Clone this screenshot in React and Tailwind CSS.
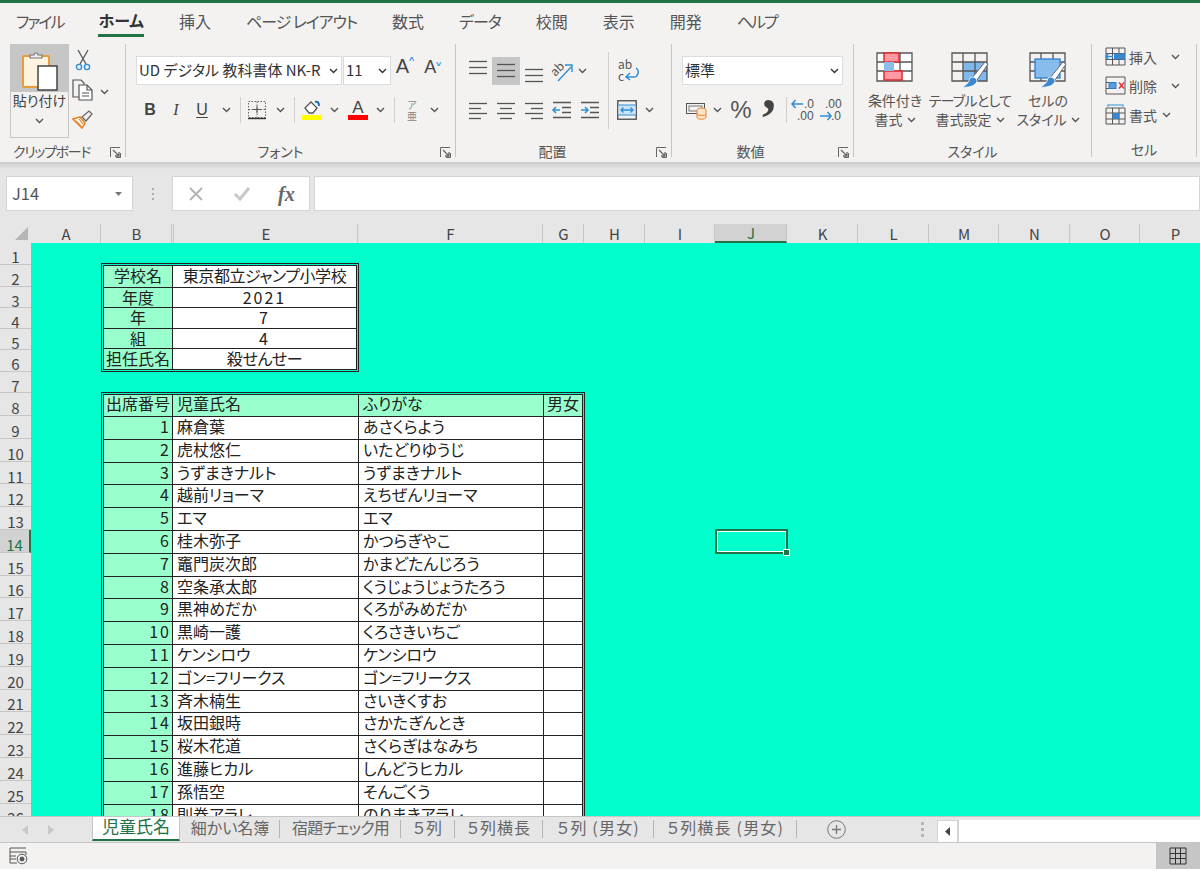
// Excel home ribbon with a class list sheet

const Chev = ({ dark }) => (
  <svg width="9" height="6" viewBox="0 0 9 6" fill="none" stroke={dark ? '#333' : '#555'} strokeWidth="1.4">
    <path d="M1 1l3.5 3.5L8 1" />
  </svg>
);

const Launcher = () => (
  <svg width="11" height="11" viewBox="0 0 11 11" fill="none" stroke="#666" strokeWidth="1">
    <path d="M.5 10V.5H10" />
    <path d="M3 3l6 6M9 5v4H5" strokeWidth="1.3" />
    <path d="M6 10.5h4.500V6" />
  </svg>
);

const Lines = ({ rows, y = 0, gap = 6 }) => (
  <svg width="22" height="24" viewBox="0 0 22 24" stroke="#555" strokeWidth="1.3">
    {rows.map(([x1, x2], i) => (
      <path key={i} d={`M${x1} ${4.5 + y + i * gap}H${x2}`} />
    ))}
  </svg>
);

const PasteIcon = () => (
  <svg width="38" height="40" viewBox="0 0 38 40">
    <rect x="2" y="5" width="26" height="31" rx="1" fill="#fdf3df" stroke="#ed9a3c" strokeWidth="2" />
    <path d="M9 7V4h4a2 2 0 0 1 4 0h4v3z" fill="#eee" stroke="#777" strokeWidth="1.2" />
    <rect x="17" y="15" width="19" height="24" fill="#fff" stroke="#444" strokeWidth="1.5" />
  </svg>
);

const Scissors = () => (
  <svg width="16" height="22" viewBox="0 0 16 22" fill="none">
    <path d="M3 1l8 14M13 1L5 15" stroke="#555" strokeWidth="1.3" />
    <circle cx="4" cy="18" r="2.6" stroke="#2f8fd6" strokeWidth="1.4" />
    <circle cx="12" cy="18" r="2.6" stroke="#2f8fd6" strokeWidth="1.4" />
  </svg>
);

const CopyIcon = () => (
  <svg width="22" height="22" viewBox="0 0 22 22" fill="#f3f2f1" stroke="#555" strokeWidth="1.2">
    <path d="M1 1h8l3 3v14H1z" />
    <path d="M7 6h8l5 5v10H7z" fill="#fff" />
    <path d="M15 6v5h5M10 14h7M10 17h7" fill="none" />
  </svg>
);

const BrushIcon = () => (
  <svg width="22" height="20" viewBox="0 0 22 20">
    <path d="M1 10l7-2 5 6-3 5z" fill="#fff" stroke="#e6862a" strokeWidth="1.6" />
    <path d="M4 12l5 5M7 10l4 5" stroke="#e6862a" strokeWidth="1.2" />
    <path d="M10 8l7-6 3 3-6 7z" fill="#eee" stroke="#666" strokeWidth="1.2" />
  </svg>
);

const BorderIcon = () => (
  <svg width="20" height="20" viewBox="0 0 20 20" stroke="#666" fill="none">
    <path d="M1.5 1.5h17v16h-17zM10 1.5v16M1.5 9.5h17" strokeDasharray="1.5 1.5" />
    <path d="M1 18.5h18" stroke="#333" strokeWidth="1.4" />
    <path d="M6 9.5h8M10 6v7" stroke="#555" />
  </svg>
);

const FillIcon = () => (
  <div className="flex flex-col items-center">
    <svg width="20" height="15" viewBox="0 0 20 15" fill="none">
      <path d="M3 8l6-6 6 6-4 5H7z" stroke="#555" strokeWidth="1.3" fill="#fff" />
      <path d="M13 2c3-1 4 1 4 4" stroke="#1b6ec2" strokeWidth="2" />
    </svg>
    <div className="w-[20px] h-[5px] bg-[#ffff00]" />
  </div>
);

const OrientIcon = () => (
  <svg width="22" height="24" viewBox="0 0 22 24" fill="none">
    <text x="0" y="14" fontSize="12" fill="#555" transform="rotate(-45 7 11)">ab</text>
    <path d="M7 22L20 8M14 6h7v7" stroke="#2f8fd6" strokeWidth="1.4" />
  </svg>
);

const WrapIcon = () => (
  <svg width="24" height="24" viewBox="0 0 24 24" fill="none">
    <text x="2" y="10" fontSize="12" fill="#555">ab</text>
    <text x="2" y="22" fontSize="12" fill="#555">c</text>
    <path d="M20 9c4 3 2 9-2 9h-7M14 14l-4 4 4 3" stroke="#2f8fd6" strokeWidth="1.5" />
  </svg>
);

const IndentIcon = ({ right }) => (
  <svg width="20" height="20" viewBox="0 0 20 20" fill="none">
    <path d="M1 2.500h18M10 7.500h9M10 12.500h9M1 17.500h18" stroke="#555" strokeWidth="1.3" />
    {right ? (
      <path d="M1 10h7M5 7l3 3-3 3" stroke="#2f8fd6" strokeWidth="1.5" />
    ) : (
      <path d="M1 10h7M4 7l-3 3 3 3" stroke="#2f8fd6" strokeWidth="1.5" />
    )}
  </svg>
);

const MergeIcon = () => (
  <svg width="20" height="20" viewBox="0 0 20 20" fill="none">
    <rect x=".75" y=".75" width="18.500" height="18.500" stroke="#555" strokeWidth="1.4" />
    <rect x="1.500" y="5" width="17" height="10" fill="#cbe3f5" />
    <path d="M1 5h18M1 15h18" stroke="#2f8fd6" />
    <path d="M4 10h12M6.500 7.500L4 10l2.500 2.500M13.500 7.500L16 10l-2.500 2.500" stroke="#2f8fd6" strokeWidth="1.3" />
  </svg>
);

const AccountIcon = () => (
  <svg width="21" height="20" viewBox="0 0 21 20" fill="none">
    <rect x=".5" y="3.500" width="18" height="10" stroke="#555" />
    <rect x="3" y="6" width="13" height="5" stroke="#777" />
    <ellipse cx="15.500" cy="10" rx="4.500" ry="2" fill="#fbe3c8" stroke="#e8862a" />
    <path d="M11 10v7c0 3 9 3 9 0v-7M11 14c0 2 9 2 9 0" fill="#fbe3c8" stroke="#e8862a" />
  </svg>
);

const DecimalIcon = ({ up }) => (
  <svg width="24" height="26" viewBox="0 0 24 26" fill="none">
    <text x={up ? 13 : 7} y="11" fontSize="12" fill="#555" fontFamily="Liberation Sans">{up ? '.0' : '.00'}</text>
    <text x={up ? 6 : 13} y="23" fontSize="12" fill="#555" fontFamily="Liberation Sans">{up ? '.00' : '.0'}</text>
    {up ? (
      <path d="M12 7H1M4.500 3L1 7l3.500 4" stroke="#2f8fd6" strokeWidth="1.6" />
    ) : (
      <path d="M2 19h11M9.500 15l3.500 4-3.500 4" stroke="#2f8fd6" strokeWidth="1.6" />
    )}
  </svg>
);

const TableGrid = ({ children }) => (
  <svg width="38" height="36" viewBox="0 0 38 36" fill="none">
    {children}
  </svg>
);

const GridLines = () => (
  <path d="M1 1h35v28H1zM1 10h35M1 19h35M12 1v28M24 1v28" stroke="#555" strokeWidth="1.300" />
);

const BrushTip = () => (
  <>
    <path d="M21 26L34 10l3 2-11 16z" fill="#fff" stroke="#666" />
    <path d="M11 35c6 1 14-1 15-6 0-3-4-5-7-3-1 4-3 7-8 9z" fill="#3a87cf" stroke="#fff" strokeWidth=".8" />
  </>
);

const CondIcon = () => (
  <TableGrid>
    <rect x="1" y="1" width="35" height="28" fill="#fff" />
    <GridLines />
    <rect x="8" y="1" width="15" height="9" fill="#ff9aa5" stroke="#e02b2b" strokeWidth="1.500" />
    <rect x="8" y="19" width="18" height="9" fill="#ff9aa5" stroke="#e02b2b" strokeWidth="1.500" />
    <rect x="8" y="10" width="10" height="9" fill="#8bbde8" />
  </TableGrid>
);

const TableIcon = () => (
  <TableGrid>
    <rect x="12" y="10" width="24" height="19" fill="#7fb8ec" />
    <GridLines />
    <BrushTip />
  </TableGrid>
);

const CellStyleIcon = () => (
  <TableGrid>
    <GridLines />
    <rect x="6" y="7" width="25" height="19" fill="#87bcec" stroke="#2d7fd0" strokeWidth="1.300" />
    <BrushTip />
  </TableGrid>
);

const InsertIcon = () => (
  <svg width="21" height="19" viewBox="0 0 21 19" fill="none">
    <path d="M1 1h19v17H1zM1 6.500h19M1 12.500h19M7.500 1v17M14 1v17" stroke="#555" />
    <rect x="9" y="6.500" width="11" height="6" fill="#3a87cf" />
    <path d="M8 9.500H1M3.500 6.500L.75 9.500l2.750 3" stroke="#2f8fd6" strokeWidth="1.400" />
  </svg>
);

const DeleteIcon = () => (
  <svg width="21" height="19" viewBox="0 0 21 19" fill="none">
    <path d="M1 1h19v17H1zM1 6.500h7M1 12.500h7" stroke="#555" />
    <rect x="4" y="6.500" width="7" height="6" fill="#5b9ddc" stroke="#2f7cc4" />
    <path d="M14 6.500l5 6M19 6.500l-5 6" stroke="#e8333a" strokeWidth="1.500" />
  </svg>
);

const FormatIcon = () => (
  <svg width="21" height="21" viewBox="0 0 21 21" fill="none">
    <path d="M1 4h19v16H1zM1 9h19M1 15h19M7.500 4v16M14 4v16" stroke="#555" />
    <rect x="7.500" y="9" width="7" height="6" fill="#3a87cf" />
    <path d="M3 1h15M3 .5v2M18 .5v2" stroke="#2f8fd6" strokeWidth="1.200" />
  </svg>
);

const Divider = () => <div className="w-px h-[113px] bg-[#c8c6c4] shrink-0" />;
const Sep = () => <div className="w-px h-[26px] bg-[#d2d0ce] shrink-0" />;

const Group = ({ w, label, labelClass = '', launcher, children }) => (
  <div className={`${w} shrink-0 relative`}>
    <div className="h-[98px]">{children}</div>
    <div className={`h-[17px] flex items-center justify-center text-[14px] leading-none text-[#555] whitespace-nowrap ${labelClass}`}>{label}</div>
    {launcher && (
      <div className="absolute right-[4px] bottom-[4px] flex">
        <Launcher />
      </div>
    )}
  </div>
);

const Slot = ({ w, active, children }) => (
  <div className={`${w} h-[28px] shrink-0 flex items-center justify-center ${active ? 'bg-[#c6c6c6]' : ''}`}>{children}</div>
);

const StyleButton = ({ w, icon, top, topClass = '', bottom }) => (
  <div className={`${w} flex flex-col items-center shrink-0 whitespace-nowrap`}>
    <div className="h-[38px] flex items-start">{icon}</div>
    <div className={`text-[14px] leading-[19px] mt-[1px] text-[#555] ${topClass}`}>{top}</div>
    <div className="text-[14px] leading-[19px] text-[#555] flex items-center gap-[4px]">
      {bottom}
      <Chev />
    </div>
  </div>
);

const CellRow = ({ icon, label, chevW }) => (
  <div className="h-[29px] flex items-center pl-[12px]">
    <div className="w-[22px] flex justify-center">{icon}</div>
    <div className="ml-[3px] w-[32px] text-[14px] text-[#555] leading-none">{label}</div>
    <div className={`${chevW} flex justify-end`}>
      <Chev />
    </div>
  </div>
);

const Ribbon = () => (
  <div className="flex h-[122px] bg-[#f3f2f1] pt-[4px] overflow-hidden">
    <Group w="w-[125px]" label="クリップボード" labelClass="pr-[22px] tracking-[-1.3px]" launcher>
      <div className="flex pl-[10px]">
        <div className="w-[59px] h-[94px] border border-[#c6c6c6] flex flex-col items-center">
          <div className="w-full h-[47px] bg-[#c6c6c6] flex items-center justify-center pt-[4px]">
            <PasteIcon />
          </div>
          <div className="text-[14px] leading-none mt-[1px] text-[#444] whitespace-nowrap">貼り付け</div>
          <div className="mt-[11px] flex">
            <Chev />
          </div>
        </div>
        <div className="ml-[3px] w-[22px] flex flex-col items-center pt-[5px] gap-[8px]">
          <Scissors />
          <CopyIcon />
          <BrushIcon />
        </div>
        <div className="pt-[45px] ml-[6px]">
          <Chev />
        </div>
      </div>
    </Group>
    <Divider />

    <Group w="w-[329px]" label="フォント" labelClass="pr-[20px]" launcher>
      <div className="pl-[10px] pt-[12px]">
        <div className="flex items-center h-[29px]">
          <div className="w-[206px] h-[29px] bg-white border border-[#dcdcdc] flex items-center pl-[2px] text-[15px] text-[#333] whitespace-nowrap">
            <span className="w-[190px]">UD デジタル 教科書体 NK-R</span>
            <Chev dark />
          </div>
          <div className="ml-px w-[48px] h-[29px] bg-white border border-[#dcdcdc] flex items-center justify-between pl-[2px] pr-[3px] text-[15px] text-[#333]">
            11
            <Chev dark />
          </div>
          <div className="w-[28px] h-[29px] flex justify-center items-start text-[20px] text-[#444] leading-none font-['Liberation_Sans',sans-serif]">
            A<span className="text-[9px] text-[#2f8fd6] font-bold">^</span>
          </div>
          <div className="w-[28px] h-[29px] pt-[2px] flex justify-center items-start text-[18px] text-[#444] leading-none font-['Liberation_Sans',sans-serif]">
            A<span className="text-[9px] text-[#2f8fd6] font-bold rotate-180">^</span>
          </div>
        </div>
        <div className="flex items-center mt-[11px]">
          <div className="w-[1px]" />
          <Slot w="w-[26px]"><span className="text-[16px] font-bold text-[#444] font-['Liberation_Sans',sans-serif]">B</span></Slot>
          <Slot w="w-[26px]"><span className="text-[16px] italic text-[#444] font-['Liberation_Serif',serif]">I</span></Slot>
          <Slot w="w-[26px]"><span className="text-[16px] underline underline-offset-2 text-[#444] font-['Liberation_Sans',sans-serif]">U</span></Slot>
          <Slot w="w-[22px]"><Chev /></Slot>
          <div className="ml-[3px]"><Sep /></div>
          <div className="w-[2px]" />
          <Slot w="w-[28px]"><BorderIcon /></Slot>
          <Slot w="w-[18px]"><Chev /></Slot>
          <div className="ml-[5px]"><Sep /></div>
          <div className="w-[2px]" />
          <Slot w="w-[30px]"><FillIcon /></Slot>
          <Slot w="w-[14px]"><Chev /></Slot>
          <div className="w-[2px]" />
          <Slot w="w-[30px]">
            <div className="flex flex-col items-center">
              <span className="text-[17px] leading-[15px] h-[15px] text-[#444] font-['Liberation_Sans',sans-serif]">A</span>
              <div className="w-[20px] h-[5px] bg-[#ff0000]" />
            </div>
          </Slot>
          <Slot w="w-[14px]"><Chev /></Slot>
          <div className="ml-[7px]"><Sep /></div>
          <div className="w-[2px]" />
          <Slot w="w-[30px]">
            <div className="flex flex-col items-center text-[10px] leading-[11px] text-[#888]">
              <span>ア</span>
              <span>亜</span>
            </div>
          </Slot>
          <Slot w="w-[14px]"><Chev /></Slot>
        </div>
      </div>
    </Group>
    <Divider />

    <Group w="w-[215px]" label="配置" labelClass="pr-[22px]" launcher>
      <div className="flex pl-[8px] pt-[12px]">
        <div className="w-[144px] shrink-0">
          <div className="flex items-center h-[29px]">
            <Slot w="w-[28px]"><Lines rows={[[2, 20], [2, 20], [2, 20]]} y={-2} /></Slot>
            <Slot w="w-[28px]" active><Lines rows={[[2, 20], [2, 20], [2, 20]]} y={1} /></Slot>
            <Slot w="w-[28px]"><Lines rows={[[2, 20], [2, 20], [2, 20]]} y={6} /></Slot>
            <Slot w="w-[28px]"><OrientIcon /></Slot>
            <Slot w="w-[12px]"><Chev /></Slot>
          </div>
          <div className="flex items-center mt-[11px]">
            <Slot w="w-[28px]"><Lines rows={[[2, 20], [2, 14], [2, 20], [2, 14]]} y={1} gap={5} /></Slot>
            <Slot w="w-[28px]"><Lines rows={[[2, 20], [5, 17], [2, 20], [5, 17]]} y={1} gap={5} /></Slot>
            <Slot w="w-[28px]"><Lines rows={[[2, 20], [8, 20], [2, 20], [8, 20]]} y={1} gap={5} /></Slot>
            <Slot w="w-[28px]"><IndentIcon /></Slot>
            <Slot w="w-[28px]"><IndentIcon right /></Slot>
          </div>
        </div>
        <div className="w-px h-[77px] -mt-[4px] bg-[#d2d0ce] shrink-0" />
        <div className="ml-[3px] w-[46px]">
          <div className="h-[29px] w-[32px] flex items-center justify-center"><WrapIcon /></div>
          <div className="flex items-center mt-[11px]">
            <Slot w="w-[30px]"><MergeIcon /></Slot>
            <Slot w="w-[14px]"><Chev /></Slot>
          </div>
        </div>
      </div>
    </Group>
    <Divider />

    <Group w="w-[181px]" label="数値" labelClass="pr-[24px]" launcher>
      <div className="pl-[10px] pt-[12px]">
        <div className="w-[161px] h-[29px] bg-white border border-[#dcdcdc] flex items-center justify-between pl-[2px] pr-[3px] text-[15px] text-[#333]">
          標準
          <Chev dark />
        </div>
        <div className="flex items-center mt-[11px] ml-[2px]">
          <Slot w="w-[24px]"><AccountIcon /></Slot>
          <Slot w="w-[18px]"><Chev /></Slot>
          <Slot w="w-[30px]"><span className="text-[24px] leading-none text-[#555] font-['Liberation_Sans',sans-serif]">%</span></Slot>
          <Slot w="w-[26px]"><span className="text-[56px] leading-none -mt-[42px] font-bold text-[#444] font-['Liberation_Serif',serif]">,</span></Slot>
          <div className="ml-[4px]"><Sep /></div>
          <div className="w-[3px]" />
          <Slot w="w-[26px]"><DecimalIcon up /></Slot>
          <Slot w="w-[28px]"><DecimalIcon /></Slot>
        </div>
      </div>
    </Group>
    <Divider />

    <Group w="w-[237px]" label="スタイル">
      <div className="flex pl-[4px] pt-[8px]">
        <StyleButton w="w-[74px]" icon={<CondIcon />} top="条件付き" bottom="書式" />
        <StyleButton w="w-[76px]" icon={<TableIcon />} top="テーブルとして" topClass="tracking-[-0.7px]" bottom="書式設定" />
        <StyleButton w="w-[80px]" icon={<CellStyleIcon />} top="セルの" bottom="スタイル" />
      </div>
    </Group>
    <Divider />

    <Group w="w-[104px]" label="セル">
      <div className="-mt-[2px]">
        <CellRow icon={<InsertIcon />} label="挿入" chevW="w-[19px]" />
        <CellRow icon={<DeleteIcon />} label="削除" chevW="w-[19px]" />
        <CellRow icon={<FormatIcon />} label="書式" chevW="w-[10px]" />
      </div>
    </Group>
    <Divider />
  </div>
);

const MENU = [
  ['ファイル', 'tracking-[-2px]'],
  ['ホーム', ''],
  ['挿入', ''],
  ['ページ レイアウト', 'tracking-[-1.1px]'],
  ['数式', ''],
  ['データ', 'tracking-[-1px]'],
  ['校閲', ''],
  ['表示', ''],
  ['開発', ''],
  ['ヘルプ', 'tracking-[-2px]'],
];

const COLUMNS = [
  ['A', 'w-[70px]'],
  ['B', 'w-[71px]'],
  ['', 'w-[2px]'],
  ['E', 'w-[184px]'],
  ['F', 'w-[185px]'],
  ['G', 'w-[41px]'],
  ['H', 'w-[61px]'],
  ['I', 'w-[70px]'],
  ['J', 'w-[72px]'],
  ['K', 'w-[71px]'],
  ['L', 'w-[71px]'],
  ['M', 'w-[70px]'],
  ['N', 'w-[71px]'],
  ['O', 'w-[70px]'],
  ['P', 'w-[71px]'],
];

const ROW_HEADS = [
  [1, 'h-[21.500px]'],
  [2, 'h-[22px]'],
  [3, 'h-[21px]'],
  [4, 'h-[21px]'],
  [5, 'h-[21px]'],
  [6, 'h-[22px]'],
  [7, 'h-[21.500px]'],
  [8, 'h-[23px]'],
  ...Array.from({ length: 18 }, (_, i) => [i + 9, 'h-[22.800px]']),
];

const INFO = [
  ['学校名', '東京都立ジャンプ小学校'],
  ['年度', '2021'],
  ['年', '7'],
  ['組', '4'],
  ['担任氏名', '殺せんせー'],
];

const STUDENTS = [
  ['麻倉葉', 'あさくらよう'],
  ['虎杖悠仁', 'いたどりゆうじ'],
  ['うずまきナルト', 'うずまきナルト'],
  ['越前リョーマ', 'えちぜんリョーマ'],
  ['エマ', 'エマ'],
  ['桂木弥子', 'かつらぎやこ'],
  ['竈門炭次郎', 'かまどたんじろう'],
  ['空条承太郎', 'くうじょうじょうたろう'],
  ['黒神めだか', 'くろがみめだか'],
  ['黒崎一護', 'くろさきいちご'],
  ['ケンシロウ', 'ケンシロウ'],
  ['ゴン=フリークス', 'ゴン=フリークス'],
  ['斉木楠生', 'さいきくすお'],
  ['坂田銀時', 'さかたぎんとき'],
  ['桜木花道', 'さくらぎはなみち'],
  ['進藤ヒカル', 'しんどうヒカル'],
  ['孫悟空', 'そんごくう'],
  ['則巻アラレ', 'のりまきアラレ'],
];

const TABS = [
  ['細かい名簿', 'w-[100px]', ''],
  ['宿題チェック用', 'w-[121px]', 'tracking-[-0.8px]'],
  ['５列', 'w-[54px]', 'tracking-[1px]'],
  ['５列横長', 'w-[88px]', 'tracking-[1px]'],
  ['５列 (男女)', 'w-[111px]', 'tracking-[1.200px]'],
  ['５列横長 (男女)', 'w-[143px]', 'tracking-[1.200px]'],
];

const Sheet = () => (
  <div className="relative flex-1 bg-[#00ffcc] overflow-hidden pl-[70px] pt-[20px] text-[16px] text-[#222]">
    <div className="w-[258px] border-[3px] border-double border-[#222] bg-white bg-clip-padding">
      {INFO.map(([k, v], i) => (
        <div key={k} className={`flex h-[20.600px] leading-[18px] ${i > 0 ? 'border-t border-[#222]' : ''}`}>
          <div className="w-[69px] bg-[#99ffcc] border-r border-[#222] text-center whitespace-nowrap">{k}</div>
          <div className="flex-1 text-center whitespace-nowrap tracking-[-0.45px]">
            {/^\d+$/.test(v) ? <span className="tracking-[2px]">{v}</span> : v}
          </div>
        </div>
      ))}
    </div>
    <div className="w-[484px] mt-[20px] border-[3px] border-double border-[#222] bg-white bg-clip-padding">
      <div className="flex h-[21px] leading-[17px] bg-[#99ffcc]">
        <div className="w-[69px] border-r border-[#222] text-center whitespace-nowrap">出席番号</div>
        <div className="w-[186px] border-r border-[#222] pl-[4px]">児童氏名</div>
        <div className="w-[185px] border-r border-[#222] pl-[4px]">ふりがな</div>
        <div className="flex-1 text-center">男女</div>
      </div>
      {STUDENTS.map(([name, kana], i) => (
        <div key={name} className="flex h-[22.800px] leading-[19px] border-t border-[#222]">
          <div className="w-[69px] bg-[#99ffcc] border-r border-[#222] text-right pr-[1px] tracking-[2px]">{i + 1}</div>
          <div className="w-[186px] border-r border-[#222] pl-[4px] whitespace-nowrap">{name}</div>
          <div className="w-[185px] border-r border-[#222] pl-[4px] whitespace-nowrap">{kana}</div>
          <div className="flex-1" />
        </div>
      ))}
    </div>
    {/* selected cell J14 */}
    <div className="absolute left-[684px] top-[286px] w-[73px] h-[25px] border-2 border-[#217346] shadow-[inset_0_0_0_1px_#ffffff]">
      <div className="absolute -right-[4px] -bottom-[4px] w-[7px] h-[7px] bg-[#217346] border border-white" />
    </div>
  </div>
);

export default function App() {
  return (
    <div className="w-[1200px] h-[871px] overflow-hidden flex flex-col bg-white font-['Noto_Sans_CJK_JP',sans-serif] [font-feature-settings:'palt']">
      <div className="h-[3px] bg-[#217346] shrink-0" />

      {/* menu tabs */}
      <div className="h-[37px] shrink-0 bg-[#f3f2f1] flex gap-[35px] pl-[16px] text-[16px] text-[#555]">
        {MENU.map(([m, track]) => (
          <div key={m} className={`flex items-center whitespace-nowrap ${track} ${m === 'ホーム' ? 'font-bold text-[#333] border-b-[3px] border-[#217346] h-[34px] pt-[3px]' : 'h-[35px]'}`}>
            {m}
          </div>
        ))}
      </div>

      <Ribbon />

      {/* formula bar */}
      <div className="h-[62px] shrink-0 pt-[14px] bg-gradient-to-b from-[#c9c9c9] from-0% to-[#e6e6e6] to-[12%]">
        <div className="flex h-[35px]">
          <div className="ml-[6px] w-[127px] bg-white border border-[#d4d4d4] flex items-center justify-between pl-[5px] pr-[10px] text-[16.500px] text-[#555]">
            J14
            <svg width="7" height="4" viewBox="0 0 7 4"><path d="M0 0h7L3.500 4z" fill="#777" /></svg>
          </div>
          <div className="w-[39px] flex flex-col items-center justify-center gap-[3px]">
            <div className="w-[2px] h-[2px] bg-[#aaa]" />
            <div className="w-[2px] h-[2px] bg-[#aaa]" />
            <div className="w-[2px] h-[2px] bg-[#aaa]" />
          </div>
          <div className="w-[138px] bg-white border border-[#d4d4d4] flex items-center pl-[15px]">
            <svg width="16" height="16" viewBox="0 0 16 16" stroke="#b5b5b5" strokeWidth="2" fill="none">
              <path d="M2 2l12 12M14 2L2 14" />
            </svg>
            <svg className="ml-[29px]" width="18" height="16" viewBox="0 0 18 16" stroke="#c8c8c8" strokeWidth="3" fill="none">
              <path d="M2 8l5 5 9-11" />
            </svg>
            <span className="ml-[27px] text-[20px] leading-none font-bold italic text-[#666] font-['Liberation_Serif',serif]">fx</span>
          </div>
          <div className="ml-[4px] flex-1 bg-white border border-[#d4d4d4]" />
        </div>
      </div>

      {/* column headers */}
      <div className="h-[19px] shrink-0 bg-[#e6e6e6] flex overflow-hidden text-[15px] leading-none text-[#444]">
        <div className="w-[31px] shrink-0 flex items-end justify-end pr-[3px] pb-[3px]">
          <svg width="13" height="13" viewBox="0 0 13 13"><path d="M13 0v13H0z" fill="#b5b5b5" /></svg>
        </div>
        {COLUMNS.map(([c, w]) => (
          <div key={w + c} className={`${w} shrink-0 flex items-center justify-center pl-px border-r border-[#c6c6c6] ${c === 'J' ? 'bg-[#d2d2d2] text-[#217346] border-b-2 border-b-[#217346]' : ''}`}>
            {c}
          </div>
        ))}
      </div>

      {/* sheet */}
      <div className="h-[573px] shrink-0 flex overflow-hidden">
        <div className="w-[31px] shrink-0 bg-[#e6e6e6] text-[15px] leading-none text-[#444]">
          {ROW_HEADS.map(([n, h]) => (
            <div key={n} className={`${h} flex items-center justify-center pt-[7px] border-b border-[#c6c6c6] ${n === 14 ? 'bg-[#d2d2d2] border-r-2 border-r-[#217346] text-[#217346]' : ''}`}>
              {n}
            </div>
          ))}
        </div>
        <Sheet />
      </div>

      {/* sheet tabs */}
      <div className="h-[27px] shrink-0 bg-[#e6e6e6] border-t border-[#c6c6c6] border-b flex items-start text-[16px] text-[#666] overflow-hidden">
        <div className="w-[92px] h-[25px] flex items-center gap-[20px] pl-[22px] text-[#c0c0c0]">
          <svg width="6" height="10" viewBox="0 0 6 10"><path d="M6 0v10L0 5z" fill="#c8c8c8" /></svg>
          <svg width="6" height="10" viewBox="0 0 6 10"><path d="M0 0v10l6-5z" fill="#c8c8c8" /></svg>
        </div>
        <div className="w-[88px] h-[25px] -mt-px pb-[4px] text-[17px] bg-white border-b-2 border-[#217346] text-[#217346] flex items-center justify-center border-x border-x-[#c6c6c6] whitespace-nowrap">児童氏名</div>
        {TABS.map(([t, w, track]) => (
          <div key={t} className={`${w} h-[25px] pb-[5px] flex items-center justify-center whitespace-nowrap relative ${track} after:absolute after:right-0 after:top-[3px] after:h-[18px] after:w-px after:bg-[#b5b5b5]`}>{t}</div>
        ))}
        <div className="ml-[29px] h-[25px] w-[20px] flex items-center justify-center">
          <svg width="19" height="19" viewBox="0 0 19 19" fill="none" stroke="#777">
            <circle cx="9.500" cy="9.500" r="8.800" />
            <path d="M9.500 5v9M5 9.500h9" strokeWidth="1.300" />
          </svg>
        </div>
        <div className="ml-[75px] h-[25px] flex flex-col justify-center gap-[3px]">
          <div className="w-[3px] h-[3px] bg-[#b5b5b5]" />
          <div className="w-[3px] h-[3px] bg-[#b5b5b5]" />
          <div className="w-[3px] h-[3px] bg-[#b5b5b5]" />
        </div>
        <div className="ml-[13px] mt-[3px] w-[21px] h-[23px] bg-white border border-[#d4d4d4] flex items-center justify-center">
          <svg width="5" height="9" viewBox="0 0 5 9"><path d="M5 0v9L0 4.500z" fill="#444" /></svg>
        </div>
        <div className="mt-[3px] flex-1 h-[23px] bg-white border-l border-[#d4d4d4]" />
      </div>

      {/* status bar */}
      <div className="h-[26px] shrink-0 bg-[#f3f2f1] flex items-center justify-between pl-[9px]">
        <svg width="20" height="18" viewBox="0 0 20 18" fill="none" stroke="#555">
          <path d="M1 1h16M1 1v15h7M1 5h16v3M1 9h6M1 12h6" />
          <circle cx="13" cy="12" r="4.800" />
          <circle cx="13" cy="12" r="2" fill="#555" />
        </svg>
        <div className="w-[44px] h-[26px] bg-[#c6c6c6] flex items-center justify-center">
          <svg width="18" height="18" viewBox="0 0 18 18" fill="none" stroke="#333">
            <path d="M1 1h16v16H1zM6.500 1v16M11.500 1v16M1 6.500h16M1 11.500h16" />
          </svg>
        </div>
      </div>
    </div>
  );
}
